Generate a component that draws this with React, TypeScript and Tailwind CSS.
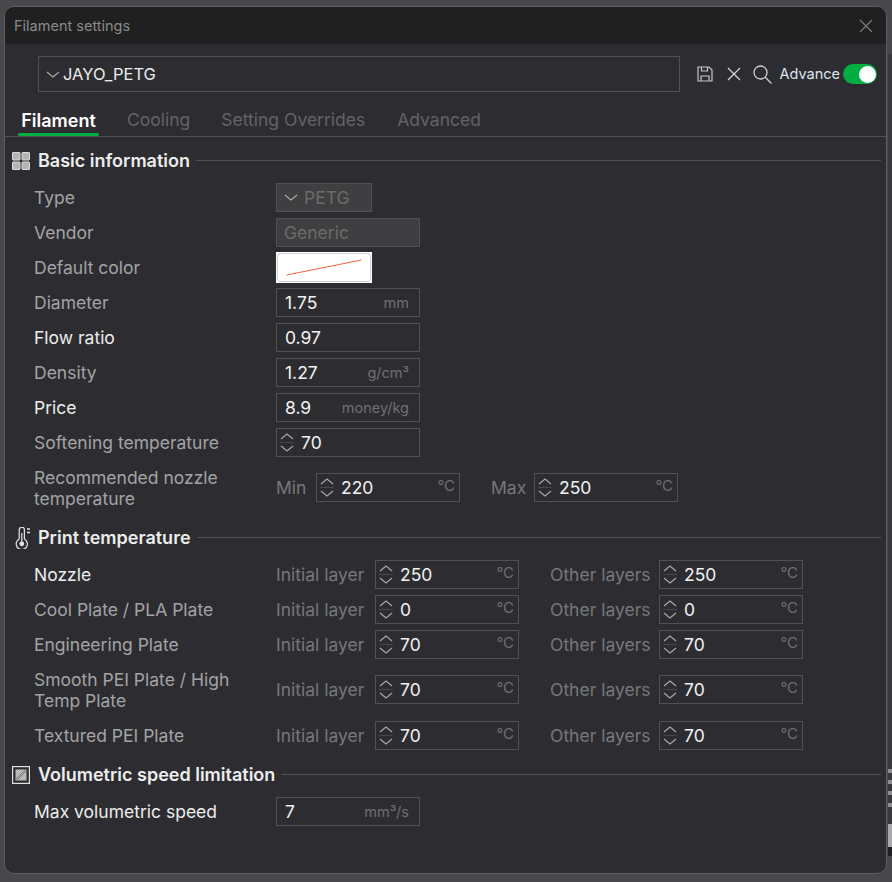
import type { ReactNode } from 'react';

const fieldBorder = 'border border-[#515155]';

function Label({ children, bright }: { children: ReactNode; bright?: boolean }) {
  return (
    <div className={`w-[242px] shrink-0 pr-4 leading-[21px] ${bright ? 'text-[#ececec]' : 'text-[#a3a3a5]'}`}>
      {children}
    </div>
  );
}

function Row({ label, bright, tall, children }: { label: ReactNode; bright?: boolean; tall?: boolean; children: ReactNode }) {
  return (
    <div className={`flex items-center ${tall ? 'h-[50px] pb-px' : 'h-[29px]'}`}>
      <Label bright={bright}>{label}</Label>
      {children}
    </div>
  );
}

function TextField({ value, unit }: { value: string; unit?: ReactNode }) {
  return (
    <div className={`flex h-[29px] w-[144px] items-center justify-between pl-2 pr-[10px] ${fieldBorder}`}>
      <span className="pt-px text-[#f2f2f2]">{value}</span>
      {unit && <span className="pt-px text-[14.5px] text-[#6f6f72]">{unit}</span>}
    </div>
  );
}

function Chevron({ up, color = '#aaaaaa' }: { up?: boolean; color?: string }) {
  return (
    <svg width="14" height="7" viewBox="0 0 14 7" fill="none" stroke={color} strokeWidth="1.1">
      <path d={up ? 'M1 6L7 1l6 5' : 'M1 1L7 6l6-5'} />
    </svg>
  );
}

function SpinField({ value, unit }: { value: string; unit?: string }) {
  return (
    <div className={`flex h-[29px] w-[144px] items-center pr-[4px] ${fieldBorder}`}>
      <div className="mr-[4px] flex w-[20px] shrink-0 flex-col items-center gap-[2px]">
        <Chevron up />
        <div className="h-px w-[14px] bg-[#47474b]" />
        <Chevron />
      </div>
      <span className="flex-1 pt-px text-[#f2f2f2]">{value}</span>
      {unit && <span className="-mt-[3px] text-[15px] text-[#6f6f72]">{unit}</span>}
    </div>
  );
}

function TempRow({ label, bright, tall, first, other }: { label: ReactNode; bright?: boolean; tall?: boolean; first: string; other: string }) {
  return (
    <Row label={label} bright={bright} tall={tall}>
      <span className="w-[99px] shrink-0 pt-px text-[#77777a]">Initial layer</span>
      <SpinField value={first} unit="°C" />
      <span className="ml-[31px] w-[109px] shrink-0 pt-px text-[#77777a]">Other layers</span>
      <SpinField value={other} unit="°C" />
    </Row>
  );
}

function Section({ icon, title, className, children }: { icon: ReactNode; title: string; className?: string; children: ReactNode }) {
  return (
    <section className={className}>
      <div className="flex h-[29px] items-center pr-[5px]">
        <div className="ml-[-22px] flex w-[26px] shrink-0 items-center">{icon}</div>
        <h2 className="whitespace-nowrap text-[18px] font-semibold text-[#ececec]">{title}</h2>
        <div className="ml-[6px] h-px flex-1 bg-[#515155]" />
      </div>
      <div className="mt-[8px] flex flex-col gap-[6px]">{children}</div>
    </section>
  );
}

function GridIcon() {
  return (
    <svg width="18" height="18" viewBox="0 0 18 18" fill="#b4b4b4" stroke="#dcdcdc">
      <rect x="0.5" y="0.5" width="7.5" height="7.5" rx="0.5" />
      <rect x="10" y="0.5" width="7.5" height="7.5" rx="0.5" />
      <rect x="0.5" y="10" width="7.5" height="7.5" rx="0.5" />
      <rect x="10" y="10" width="7.5" height="7.5" rx="0.5" />
    </svg>
  );
}

function ThermometerIcon() {
  return (
    <svg width="16" height="22" viewBox="0 0 16 22" fill="none" stroke="#e4e4e4" strokeWidth="1.2" className="ml-[3px]">
      <path d="M4.2 2.8a2.6 2.6 0 0 1 5.2 0V12a5.6 5.6 0 1 1 -5.2 0Z" />
      <circle cx="6.8" cy="16.8" r="2.4" fill="#e4e4e4" stroke="none" />
      <path d="M6.8 6v10" />
      <path d="M12 2h3M12 5.5h3" strokeWidth="1.5" />
    </svg>
  );
}

function HatchIcon() {
  return (
    <svg width="18" height="18" viewBox="0 0 18 18" fill="none">
      <rect x="0.6" y="0.6" width="16.8" height="16.8" stroke="#e0e0e0" strokeWidth="1.2" />
      <rect x="3.5" y="3.5" width="11" height="11" fill="#b8b8b8" />
      <path d="M3.5 13.5l10-10M4.5 14.5l10-10" stroke="#77777a" strokeWidth="1" />
    </svg>
  );
}

function SaveIcon() {
  return (
    <svg width="16" height="16" viewBox="0 0 16 16" fill="none" stroke="#c8c8c8" strokeWidth="1.2">
      <path d="M1 1h11l3 3v11H1Z" />
      <path d="M4.5 1v4h6V1M4 15v-5h8v5" />
    </svg>
  );
}

function CrossIcon({ color }: { color: string }) {
  return (
    <svg width="14" height="14" viewBox="0 0 14 14" fill="none" stroke={color} strokeWidth="1.2">
      <path d="M1 1l12 12M13 1L1 13" />
    </svg>
  );
}

function SearchIcon() {
  return (
    <svg width="19" height="19" viewBox="0 0 19 19" fill="none" stroke="#d0d0d0" strokeWidth="1.3">
      <circle cx="7.5" cy="7.5" r="6.5" />
      <path d="M12.2 12.2L18.5 18.5" />
    </svg>
  );
}

export default function App() {
  return (
    <div className="relative h-[882px] w-[892px] overflow-hidden bg-[#48484c] pl-[4px] pt-[6px] font-['Inter',sans-serif] text-[17.5px]">
      {/* Sliver of the window behind the dialog */}
      <div className="absolute right-0 top-[54px] flex h-[802px] w-[4px] flex-col bg-[#38383c]">
        <div className="h-[715px] shrink-0" />
        <div className="h-[4px] shrink-0 bg-[#8e8e90]" />
        <div className="h-[7px] shrink-0" />
        <div className="h-[4px] shrink-0 bg-[#8e8e90]" />
        <div className="h-[7px] shrink-0" />
        <div className="h-[4px] shrink-0 bg-[#8e8e90]" />
        <div className="h-[8px] shrink-0" />
        <div className="h-[4px] shrink-0 bg-[#8e8e90]" />
        <div className="h-[17px] shrink-0" />
        <div className="h-[23px] shrink-0 bg-[#aaaaaa]" />
        <div className="flex-1 bg-[#202020]" />
      </div>

      <div className="relative flex h-[868px] w-[883px] flex-col overflow-hidden rounded-[10px] border border-[#5e5e62] bg-[#2d2d31]">
        {/* Title bar */}
        <div className="flex h-[37px] shrink-0 items-center justify-between bg-[#202020] pl-[9px] pr-[13px]">
          <span className="text-[14.5px] text-[#8a8a8a]">Filament settings</span>
          <CrossIcon color="#7c7c7c" />
        </div>

        {/* Preset selector */}
        <div className="mt-[12px] flex h-[36px] shrink-0 items-center pl-[33px] pr-[9px]">
          <div className={`flex h-full w-[642px] items-center gap-[3px] pl-[7px] ${fieldBorder}`}>
            <Chevron />
            <span className="text-[16.5px] text-[#ececec]">JAYO_PETG</span>
          </div>
          <div className="ml-[17px] flex items-center">
            <SaveIcon />
            <div className="ml-[14px]"><CrossIcon color="#d8d8d8" /></div>
            <div className="ml-[12px]"><SearchIcon /></div>
            <span className="ml-[8px] -mt-px text-[14.5px] text-[#dde4ee]">Advance</span>
            <div className="ml-[3px] flex h-[20px] w-[34px] items-center justify-end rounded-full bg-[#00ae42] pr-[1px]">
              <div className="size-[17px] rounded-full bg-white" />
            </div>
          </div>
        </div>

        {/* Tabs */}
        <div className="flex h-[45px] shrink-0 items-end border-b border-[#515155] pl-[13px] text-[17.5px] text-[#636366]">
          <div className="relative flex h-full w-[81px] items-center justify-center pt-[12px] text-[18px] font-semibold text-white">
            Filament
            <div className="absolute bottom-0 left-0 right-0 h-[3px] rounded-full bg-[#00ae42]" />
          </div>
          <div className="ml-[28px] flex h-full items-center pt-[13px]">Cooling</div>
          <div className="ml-[31px] flex h-full items-center pt-[13px]">Setting Overrides</div>
          <div className="ml-[32px] flex h-full items-center pt-[13px]">Advanced</div>
        </div>

        {/* Settings */}
        <div className="pl-[29px]">
          <Section icon={<GridIcon />} title="Basic information" className="mt-[9px]">
            <Row label="Type">
              <div className="flex h-[29px] w-[96px] items-center gap-[6px] border border-[#515155] bg-[#3f3f41] pl-[7px] text-[#6b6b6b]">
                <Chevron />
                <span className="pt-px">PETG</span>
              </div>
            </Row>
            <Row label="Vendor">
              <div className="flex h-[29px] w-[144px] items-center border border-[#515155] bg-[#3f3f41] pl-[7px] pt-px text-[#6b6b6b]">Generic</div>
            </Row>
            <Row label="Default color">
              <div className="h-[31px] w-[96px] bg-white p-px">
                <div className="flex h-full items-center justify-center rounded-[3px] border border-[#d0d0d0] bg-white">
                  <svg width="76" height="17" viewBox="0 0 76 17" fill="none">
                    <path d="M0.5 16L75.5 1" stroke="#f4623a" />
                  </svg>
                </div>
              </div>
            </Row>
            <Row label="Diameter"><TextField value="1.75" unit="mm" /></Row>
            <Row label="Flow ratio" bright><TextField value="0.97" /></Row>
            <Row label="Density"><TextField value="1.27" unit="g/cm³" /></Row>
            <Row label="Price" bright><TextField value="8.9" unit="money/kg" /></Row>
            <Row label="Softening temperature"><SpinField value="70" /></Row>
            <Row label={<>Recommended nozzle<br />temperature</>} tall>
              <span className="w-[40px] shrink-0 pt-px text-[#77777a]">Min</span>
              <SpinField value="220" unit="°C" />
              <span className="ml-[31px] w-[43px] shrink-0 pt-px text-[#77777a]">Max</span>
              <SpinField value="250" unit="°C" />
            </Row>
          </Section>

          <Section icon={<ThermometerIcon />} title="Print temperature" className="mt-[10px]">
            <TempRow label="Nozzle" bright first="250" other="250" />
            <TempRow label="Cool Plate / PLA Plate" first="0" other="0" />
            <TempRow label="Engineering Plate" first="70" other="70" />
            <TempRow label={<>Smooth PEI Plate / High<br />Temp Plate</>} tall first="70" other="70" />
            <TempRow label="Textured PEI Plate" first="70" other="70" />
          </Section>

          <Section icon={<HatchIcon />} title="Volumetric speed limitation" className="mt-[10px]">
            <Row label="Max volumetric speed" bright><TextField value="7" unit="mm³/s" /></Row>
          </Section>
        </div>
      </div>
    </div>
  );
}
